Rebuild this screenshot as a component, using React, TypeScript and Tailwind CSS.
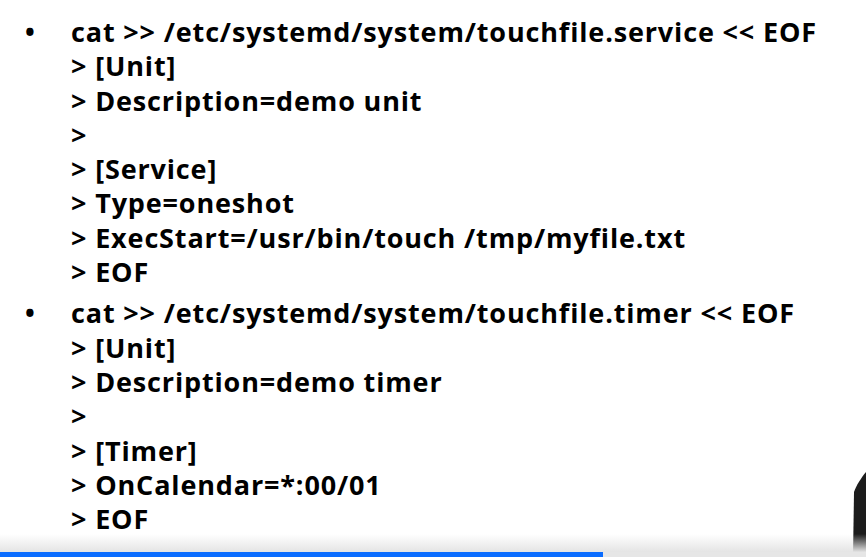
const first = [
  "cat >> /etc/systemd/system/touchfile.service << EOF",
  "> [Unit]",
  "> Description=demo unit",
  ">",
  "> [Service]",
  "> Type=oneshot",
  "> ExecStart=/usr/bin/touch /tmp/myfile.txt",
  "> EOF",
];

const second = [
  "cat >> /etc/systemd/system/touchfile.timer << EOF",
  "> [Unit]",
  "> Description=demo timer",
  ">",
  "> [Timer]",
  "> OnCalendar=*:00/01",
  "> EOF",
];

const Item = ({ lines }: { lines: string[] }) => (
  <li className="flex">
    <span className="w-[71px] shrink-0 pl-[25px] text-[26px] tracking-normal">•</span>
    <div>
      {lines.map((l, i) => (
        <div key={i} className="whitespace-pre">
          {l}
        </div>
      ))}
    </div>
  </li>
);

export default function App() {
  return (
    <div
      className="relative h-[557px] w-[866px] overflow-hidden bg-white text-black"
      style={{ fontFamily: '"Open Sans", sans-serif' }}
    >
      <ul className="flex flex-col gap-[7px] pt-[15px] text-[27px] font-bold leading-[34.3px] tracking-[0.85px]">
        <Item lines={first} />
        <Item lines={second} />
      </ul>

      {/* dark shape at the right edge */}
      <svg
        className="absolute right-0 bottom-0"
        width="14"
        height="85"
        viewBox="0 0 14 85"
      >
        <path d="M14 0 C9 6 4 14 2 20 L1 85 L14 85 Z" fill="#1c1c1c" />
      </svg>

      {/* bottom fade + progress bar */}
      <div className="absolute inset-x-0 bottom-0">
        <div className="h-[18px] bg-gradient-to-b from-white/0 to-[#e4e4e4]" />
        <div className="flex h-[5px] bg-[#e6e6e6]">
          <div className="w-[603px] bg-[#0a6cff]" />
        </div>
      </div>
    </div>
  );
}
